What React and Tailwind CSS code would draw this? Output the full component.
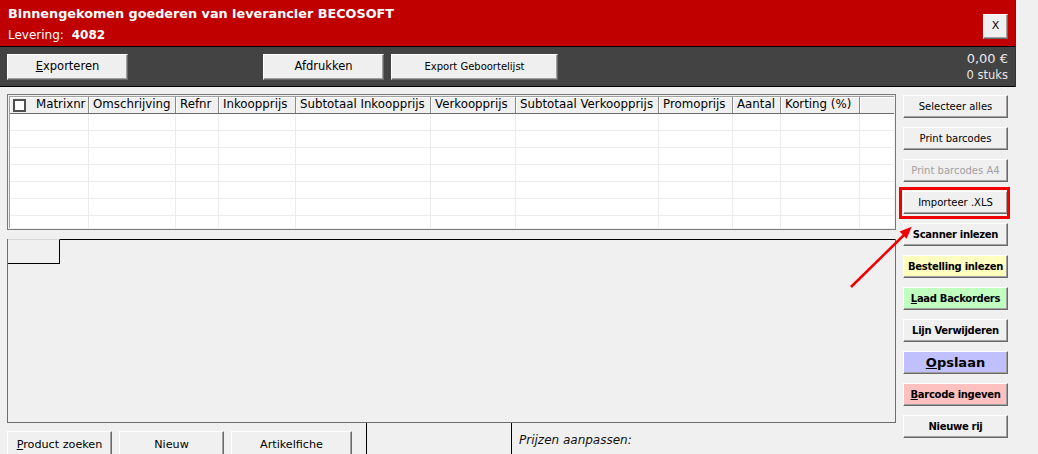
const btn =
  "flex shrink-0 items-center justify-center border border-white border-r-[#696969] border-b-[#696969] shadow-[inset_-1px_-1px_0_#a0a0a0] text-black";

const columns = [
  { label: "Matrixnr", w: "w-[79px]", check: true },
  { label: "Omschrijving", w: "w-[87px]" },
  { label: "Refnr", w: "w-[43px]" },
  { label: "Inkoopprijs", w: "w-[77px]" },
  { label: "Subtotaal Inkoopprijs", w: "w-[135px]" },
  { label: "Verkoopprijs", w: "w-[85px]" },
  { label: "Subtotaal Verkoopprijs", w: "w-[143px]" },
  { label: "Promoprijs", w: "w-[74px]" },
  { label: "Aantal", w: "w-[48px]" },
  { label: "Korting (%)", w: "w-[79px]" },
];

const sideButtons = [
  { label: "Selecteer alles", cls: "bg-[#f0f0f0] text-[10px]" },
  { label: "Print barcodes", cls: "bg-[#f0f0f0] text-[10px]" },
  { label: "Print barcodes A4", cls: "bg-[#f0f0f0] text-[10px] text-[#a0a0a0]!" },
  { label: "Importeer .XLS", cls: "bg-[#f0f0f0] text-[10px]", marked: true },
  { label: "Scanner inlezen", cls: "bg-[#f0f0f0] text-[10px] font-bold tracking-[-0.3px]" },
  { label: "Bestelling inlezen", cls: "bg-[#ffffc0] text-[10px] font-bold tracking-[-0.3px]" },
  { label: "Laad Backorders", cls: "bg-[#c0ffc0] text-[10px] font-bold tracking-[-0.3px]", u: 1 },
  { label: "Lijn Verwijderen", cls: "bg-[#f0f0f0] text-[10px] font-bold tracking-[-0.3px]" },
  { label: "Opslaan", cls: "bg-[#c0c0ff] text-[13px] font-bold", u: 1 },
  { label: "Barcode ingeven", cls: "bg-[#ffc0c0] text-[10px] font-bold tracking-[-0.3px]", u: 1 },
  { label: "Nieuwe rij", cls: "bg-[#f0f0f0] text-[10px] font-bold tracking-[-0.3px]" },
];

function Label({ text, u }) {
  if (!u) return <span>{text}</span>;
  return (
    <span>
      <span className="underline">{text.slice(0, u)}</span>
      {text.slice(u)}
    </span>
  );
}

export default function App() {
  return (
    <div className="relative h-[454px] w-[1038px] overflow-hidden bg-[#f0f0f0] font-['DejaVu_Sans',Verdana,sans-serif]">
      {/* title + toolbar */}
      <div className="w-[1016px] border-r border-[#333]">
        <div className="flex h-[46px] justify-between bg-[#c00000] pl-2 pr-[7px]">
          <div className="pt-[5px] text-white">
            <div className="text-[12.8px] font-bold leading-[18px]">
              Binnengekomen goederen van leverancier BECOSOFT
            </div>
            <div className="mt-[5px] text-[12px] leading-[15px]">
              Levering: <span className="ml-[4px] font-bold">4082</span>
            </div>
          </div>
          <button className={`${btn} mt-[14px] h-[25px] w-[25px] bg-[#f0f0f0] text-[11px]`}>X</button>
        </div>
        <div className="flex h-[41px] items-center border-y border-black bg-[#434343] pl-[7px] pr-[7px]">
          <button className={`${btn} h-[26px] w-[121px] bg-[#efefef] text-[11.5px]`}>
            <Label text="Exporteren" u={1} />
          </button>
          <button className={`${btn} ml-[135px] h-[26px] w-[121px] bg-[#efefef] text-[11.5px]`}>
            Afdrukken
          </button>
          <button className={`${btn} ml-[7px] h-[26px] w-[167px] bg-[#efefef] text-[10px]`}>
            Export Geboortelijst
          </button>
          <div className="ml-auto text-right text-[#e8e8e8]">
            <div className="text-[13px] leading-[17px]">0,00 €</div>
            <div className="text-[11.5px] leading-[16px]">0 stuks</div>
          </div>
        </div>
      </div>

      <div className="flex pl-[7px] pt-[7px]">
        {/* left */}
        <div className="flex w-[889px] shrink-0 flex-col">
          <div className="h-[136px] border border-[#7a7a7a] bg-[#f0f0f0] p-px">
            <div className="h-full overflow-hidden border-l border-t border-[#a0a0a0]">
              <div className="flex h-[17px] border-b border-[#696969] text-[11.8px] text-black">
                {columns.map((c) => (
                  <div
                    key={c.label}
                    className={`${c.w} flex shrink-0 items-center border-r border-[#8a8a8a] pl-1 shadow-[inset_1px_1px_0_#fff] ${c.check ? "gap-[10px] pl-[3px]" : ""}`}
                  >
                    {c.check && <span className="h-[13px] w-[13px] shrink-0 border-2 border-[#505050] bg-white" />}
                    <span className="whitespace-nowrap leading-none">{c.label}</span>
                  </div>
                ))}
                <div className="flex-1 shadow-[inset_1px_1px_0_#fff]" />
              </div>
              <div className="flex h-full bg-white">
                {columns.map((c) => (
                  <div key={c.label} className={`${c.w} shrink-0 border-r border-[#ececec]`}>
                    {[0, 1, 2, 3, 4, 5, 6].map((r) => (
                      <div key={r} className="h-[17px] border-b border-[#ececec]" />
                    ))}
                  </div>
                ))}
                <div className="flex-1">
                  {[0, 1, 2, 3, 4, 5, 6].map((r) => (
                    <div key={r} className="h-[17px] border-b border-[#ececec]" />
                  ))}
                </div>
              </div>
            </div>
          </div>

          <div className="mt-[9px] flex h-[184px] flex-col border-x border-b border-[#6d6d6d]">
            <div className="flex">
              <div className="h-[25px] w-[52px] border-r border-b border-t border-black border-t-[#d8d8d8]" />
              <div className="flex-1 border-t border-black" />
            </div>
          </div>

          <div className="flex h-[32px] items-start text-[11.2px]">
            <button className={`${btn} mt-[8px] h-[28px] w-[105px] bg-[#f0f0f0]`}>
              <Label text="Product zoeken" u={1} />
            </button>
            <button className={`${btn} ml-[7px] mt-[8px] h-[28px] w-[105px] bg-[#f0f0f0]`}>Nieuw</button>
            <button className={`${btn} ml-[7px] mt-[8px] h-[28px] w-[121px] bg-[#f0f0f0]`}>Artikelfiche</button>
            <div className="ml-[14px] h-full w-[146px] shrink-0 border-x border-black" />
            <div className="ml-[7px] pt-[8px] text-[12px] italic text-[#111]">Prijzen aanpassen:</div>
          </div>
        </div>

        {/* right */}
        <div className="ml-[7px] mt-px flex w-[105px] shrink-0 flex-col gap-[9px]">
          {sideButtons.map((b) => (
            <div key={b.label} className="relative">
              <button className={`${btn} ${b.cls} h-[23px] w-full whitespace-nowrap`}>
                <Label text={b.label} u={b.u} />
              </button>
              {b.marked && (
                <div className="absolute -bottom-[5px] -left-[4px] -right-[2px] -top-[4px] border-[3px] border-[#f00000]" />
              )}
            </div>
          ))}
        </div>
      </div>

      {/* annotation arrow */}
      <svg className="absolute left-[845px] top-[220px]" width="75" height="75" viewBox="0 0 75 75">
        <line x1="6" y1="67" x2="59" y2="15" stroke="#f00000" strokeWidth="2.5" />
        <polygon points="66.7,6.7 61.6,18.7 54.6,11.5" fill="#f00000" />
      </svg>
    </div>
  );
}
